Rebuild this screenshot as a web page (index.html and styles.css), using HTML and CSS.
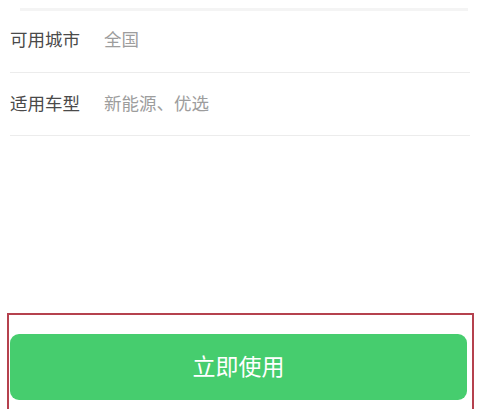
FILE: index.html
```html
<!DOCTYPE html>
<html>
  <head>
    <meta charset="utf-8">
    <title>优惠券详情</title>
    <link rel="stylesheet" href="styles.css">
  </head>
  <body>
    <div class="page">
      <div class="top-line"></div>
      <div class="info-list">
        <div class="info-row">
          <span class="info-label">可用城市</span>
          <span class="info-value">全国</span>
        </div>
        <div class="info-row">
          <span class="info-label">适用车型</span>
          <span class="info-value">新能源、优选</span>
        </div>
      </div>
      <div class="footer">
        <button class="use-btn">立即使用</button>
      </div>
    </div>
  </body>
</html>
```
FILE: styles.css
```css
html, body {
  margin: 0;
  padding: 0;
  background: #fff;
}
body {
  font-family: "Noto Sans CJK SC", "Noto Sans", sans-serif;
  height: 409px;
  overflow: hidden;
}
.page {
  display: flex;
  flex-direction: column;
}
.top-line {
  height: 3px;
  margin: 8px 18px 0 20px;
  background: #f4f4f4;
}
.info-list {
  margin: 0 16px 0 10px;
}
.info-row {
  display: flex;
  align-items: center;
  box-sizing: border-box;
  height: 62px;
  padding-bottom: 6px;
  border-bottom: 1px solid #ececec;
}
.info-row + .info-row {
  height: 63px;
  padding-bottom: 4px;
}
.info-label {
  width: 94px;
  font-size: 17.5px;
  color: #4a4a4a;
}
.info-value {
  font-size: 17.5px;
  color: #9d9d9d;
}
.footer {
  margin: 177px 0 0 7px;
  width: 462px;
  border: 2px solid #b5414e;
  padding: 19px 0 9px 1px;
}
.use-btn {
  display: block;
  width: 457px;
  height: 66px;
  border: none;
  border-radius: 9px;
  background: #46cd6e;
  color: #fff;
  font-family: "Noto Sans CJK SC", sans-serif;
  font-size: 23px;
  padding: 0 0 5px;
}
```
